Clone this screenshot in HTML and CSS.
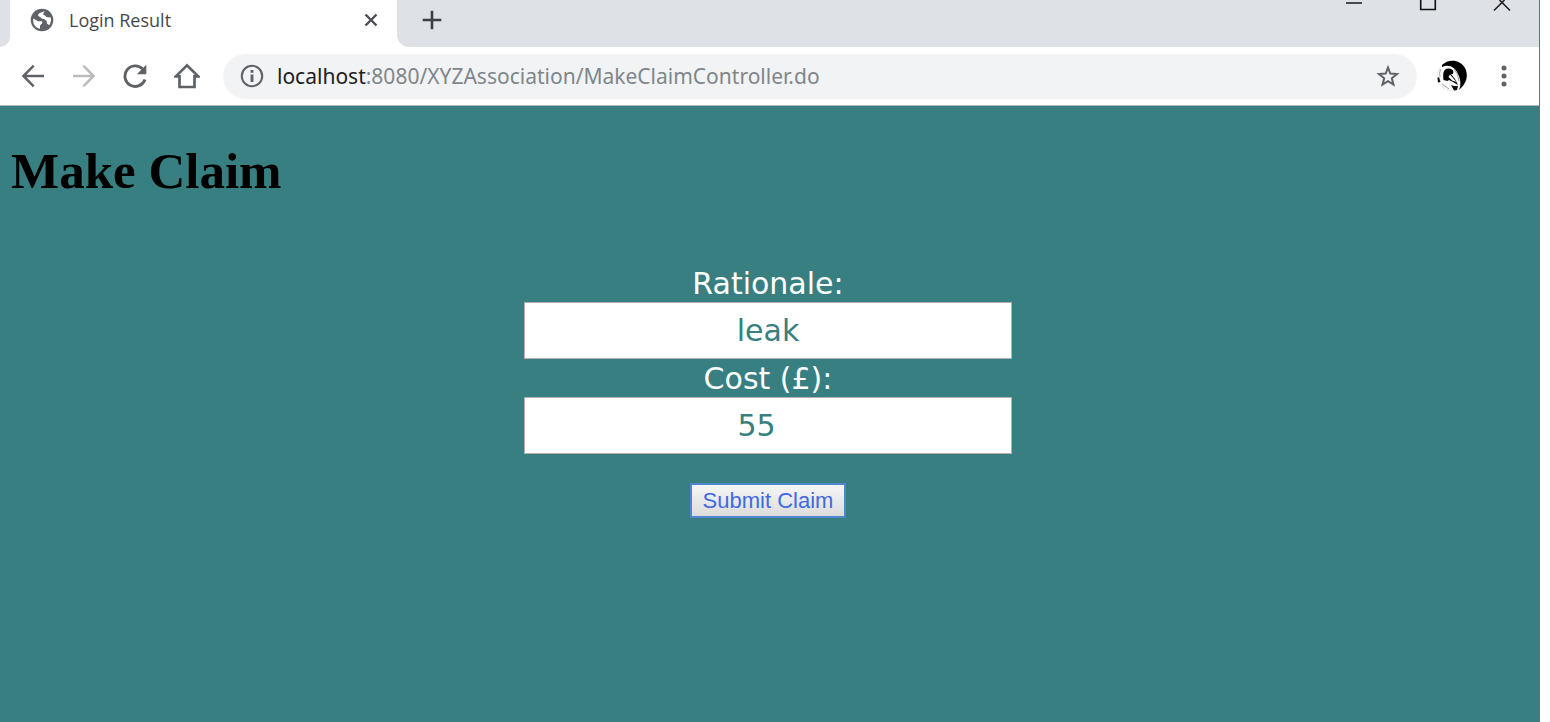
FILE: index.html
```
<!DOCTYPE html>
<html lang="en">
<head>
<meta charset="utf-8">
<title>Login Result</title>
<link rel="stylesheet" href="styles.css">
</head>
<body>
<div class="window">
  <header class="chrome">
    <div class="tabstrip">
      <div class="strip-start"></div>
      <div class="tab">
        <svg class="globe" viewBox="0 0 24 24" width="24" height="24" aria-hidden="true">
          <circle cx="12" cy="12" r="11.3" fill="#5f6368"/>
          <path d="M3.2 10.5 L8 13.2 L12.2 13.2 L12.2 15.2 L10 17.5 L10 20.8 C5.8 20 2.6 16.400 3.200 10.500Z" fill="#fff"/>
          <path d="M14.500 3.100 C12 4.600 8.200 5 8.200 7.200 C8.200 8.500 9.600 8.500 10.500 9.300 C11.300 10.200 12 11.200 13.500 11 C15 10.800 15 12.600 16.600 12.700 L17 15.500 L19.200 17.200 C21.300 14 21.400 11.600 20.600 9.300 L17.500 9.300 C15.800 9.300 16 7.500 14.500 7.200 L13 6.500 Z" fill="#fff"/>
        </svg>
        <span class="tab-title">Login Result</span>
        <button class="icon-button" aria-label="Close tab">
          <svg viewBox="0 0 16 16" width="16" height="16"><path d="M2.500 2.500 L13.500 13.500 M13.500 2.500 L2.500 13.500" stroke="#4b4e52" stroke-width="2.400" fill="none"/></svg>
        </button>
      </div>
      <div class="strip-rest">
        <button class="icon-button" aria-label="New tab">
          <svg viewBox="0 0 20 20" width="20" height="20"><path d="M10 .7 V19.300 M.7 10 H19.300" stroke="#3c4043" stroke-width="2.600" fill="none"/></svg>
        </button>
        <div class="window-controls">
          <button class="icon-button" aria-label="Minimize"><svg viewBox="0 0 18 12" width="18" height="12"><path d="M1 3 H17" stroke="#222" stroke-width="1.600"/></svg></button>
          <button class="icon-button" aria-label="Maximize"><svg viewBox="0 0 18 12" width="18" height="12"><path d="M1.700 0 V9.500 H16.300 V0" stroke="#111" stroke-width="1.600" fill="none"/></svg></button>
          <button class="icon-button" aria-label="Close"><svg viewBox="0 0 18 12" width="18" height="12"><path d="M1 10.500 L11.500 0 M6.500 0 L17 10.500" stroke="#222" stroke-width="1.600" fill="none"/></svg></button>
        </div>
      </div>
    </div>
    <nav class="toolbar" aria-label="Browser toolbar">
      <div class="nav-buttons">
        <button class="icon-button" aria-label="Back"><svg viewBox="0 0 24 24" width="24" height="24"><path d="M23 12 H2.500 M12.700 1.700 L2.400 12 L12.700 22.300" stroke="#5f6368" stroke-width="2.500" fill="none"/></svg></button>
        <button class="icon-button" aria-label="Forward"><svg viewBox="0 0 24 24" width="24" height="24"><path d="M1 12 H21.500 M11.300 1.700 L21.600 12 L11.300 22.300" stroke="#babcbe" stroke-width="2.500" fill="none"/></svg></button>
        <button class="icon-button" aria-label="Reload"><svg viewBox="0 0 24 24" width="24" height="24"><path d="M22 15.500 A10.300 10.300 0 1 1 19.700 5" stroke="#5f6368" stroke-width="2.900" fill="none"/><path d="M23.300 .7 V10.200 H13.800Z" fill="#5f6368"/></svg></button>
        <button class="icon-button" aria-label="Home"><svg viewBox="0 0 26 26" width="26" height="26"><path d="M1.800 13.400 L13 2.300 L24.200 13.400 H20.500 V24 H5.500 V13.400Z" stroke="#5f6368" stroke-width="2.700" fill="none"/></svg></button>
      </div>
      <div class="address">
        <svg viewBox="0 0 24 24" width="24" height="24" aria-hidden="true"><circle cx="12" cy="12" r="10.200" stroke="#5f6368" stroke-width="2.100" fill="none"/><path d="M12 10.500 V18 M12 6 V8.700" stroke="#5f6368" stroke-width="2.900"/></svg>
        <span class="url"><span class="host">localhost</span>:8080/XYZAssociation/MakeClaimController.do</span>
        <button class="icon-button" aria-label="Bookmark this page"><svg viewBox="0 0 24 24" width="24" height="24"><path d="M12 3.500 L14.300 9.600 L21 10 L15.800 14.300 L17.500 20.600 L12 17.100 L6.500 20.600 L8.200 14.300 L3 10 L9.700 9.600Z" stroke="#5f6368" stroke-width="2" fill="none"/></svg></button>
      </div>
      <button class="icon-button" aria-label="Profile">
        <svg viewBox="0 0 32 32" width="32" height="32">
          <circle cx="16" cy="16" r="15" fill="#fcfcfc" stroke="#ddd" stroke-width=".6"/>
          <path d="M6 5 C13 -2 25 0 29 8 C33 16 30 24 23 30 C25 25 25 20 22 14 C19 7 13 4 6 7Z" fill="#000"/>
          <path d="M7.500 20 C6.500 12 8 8 13 8.500 C17 9 18 11 17 14 L15 14 L19 19 L22 25 L17 22 L13 20 L11.500 21Z" fill="#050505"/>
          <path d="M14 14.500 L20.500 22 L16 20.500 L12.500 17Z" fill="#fff"/>
          <path d="M15 25 L18 26 L22 26 L21 30 L18 30.500Z M1.500 18 L3 17 L4.500 22 L2 22.500Z" fill="#111"/>
          <path d="M4.500 9 Q3 13 4 17 M6 24 L13 29 M18 9 Q22 13 23 21" stroke="#999" stroke-width=".9" fill="none"/>
        </svg>
      </button>
      <button class="icon-button" aria-label="Menu"><svg viewBox="0 0 8 24" width="8" height="24"><g fill="#5f6368"><circle cx="4" cy="4" r="2.500"/><circle cx="4" cy="12" r="2.500"/><circle cx="4" cy="20" r="2.500"/></g></svg></button>
    </nav>
  </header>
  <main class="page">
    <h1 class="heading">Make Claim</h1>
    <form class="claim-form">
      <label class="label" for="rationale">Rationale:</label>
      <input class="field" id="rationale" type="text" value="leak">
      <label class="label" for="cost">Cost (£):</label>
      <input class="field field-number" id="cost" type="number" value="55">
      <button class="submit" type="button">Submit Claim</button>
    </form>
  </main>
</div>
</body>
</html>
```
FILE: styles.css
```
* { box-sizing: border-box; }
body { margin: 0; background: #fff; }
svg { display: block; flex: none; }
.window {
  display: flex;
  flex-direction: column;
  min-height: 100vh;
  margin-right: 10px;
  border-right: 1px solid #6b6f70;
}
.icon-button { display: block; flex: none; padding: 0; border: 0; background: none; }
.chrome { font-family: "Open Sans", "Noto Sans", sans-serif; border-bottom: 1px solid #b3b7b9; }
.tabstrip { display: flex; height: 47px; background: #fff; }
.strip-start { width: 10px; background: #dee1e6; border-radius: 0 0 10px 0; }
.tab {
  display: flex;
  align-items: center;
  width: 387px;
  height: 40px;
  padding: 0 18px 0 20px;
}
.tab-title { flex: 1; margin-left: 15px; font-size: 18px; line-height: 24px; color: #45494d; }
.strip-rest {
  display: flex;
  flex: 1;
  align-items: flex-start;
  justify-content: space-between;
  padding: 10px 28px 0 25px;
  background: #dee1e6;
  border-radius: 0 0 0 12px;
}
.window-controls { display: flex; gap: 56px; margin-top: -10px; }
.toolbar {
  display: flex;
  align-items: center;
  height: 58px;
  padding: 0 31px 0 21px;
  background: #fff;
}
.nav-buttons { display: flex; align-items: center; gap: 27px; margin-right: 23px; }
.address {
  display: flex;
  flex: 1;
  align-items: center;
  height: 45px;
  margin-right: 19px;
  padding: 0 17px;
  background: #f1f3f4;
  border-radius: 23px;
}
.url { flex: 1; margin-left: 13px; font: 21px/28px "Noto Sans", "Open Sans", sans-serif; color: #80868b; }
.host { color: #202124; }
.toolbar > .icon-button + .icon-button { margin-left: 32px; }
.page { flex: 1; padding: 35px 14px 0 11px; background: #377f80; }
.heading { margin: 0; font: bold 51px/60px "Liberation Serif", "Times New Roman", serif; color: #000; }
.claim-form {
  display: flex;
  flex-direction: column;
  align-items: center;
  margin-top: 63px;
  font-family: "DejaVu Sans", Verdana, sans-serif;
}
.label { padding-top: 2px; font-size: 30px; line-height: 36px; color: #fff; }
.field {
  width: 488px;
  height: 57px;
  padding: 0 8px;
  border: 1px solid #b4b0b0;
  background: #fff;
  color: #377f80;
  font: 30px/38px "DejaVu Sans", Verdana, sans-serif;
  text-align: center;
}
.field-number { padding-right: 16px; appearance: textfield; }
.submit {
  margin-top: 29px;
  padding: 0 11px;
  border: 2px solid #4f86cf;
  background: linear-gradient(#f6f6f6, #dcdcdc);
  color: #4169e1;
  font: 22px/31px "Liberation Sans", Arial, sans-serif;
}
```
